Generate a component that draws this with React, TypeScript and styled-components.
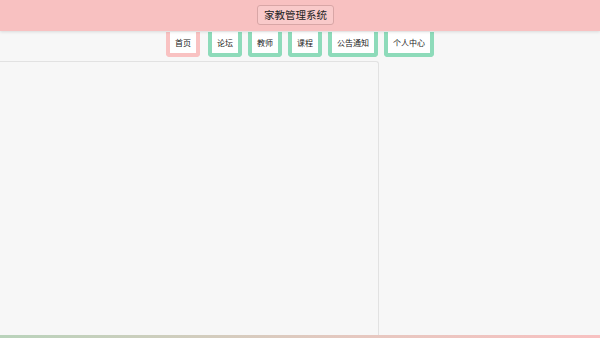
import React from 'react'
import styled, { createGlobalStyle } from 'styled-components'

const navItems = [
    { id: 1, name: '首页', active: true },
    { id: 2, name: '论坛' },
    { id: 3, name: '教师' },
    { id: 4, name: '课程' },
    { id: 5, name: '公告通知' },
    { id: 6, name: '个人中心' },
]

const App = () => {
    return (
        <Page>
            <GlobalStyle />
            <Header>
                <Title>家教管理系统</Title>
            </Header>

            <Nav>
            {
                navItems.map((item) => (
                    <NavButton key={item.id} $active={item.active}>{item.name}</NavButton>
                ))
            }
            </Nav>

            <Content>
                <MainPanel />
                <SidePanel />
            </Content>

            <BottomBar />
        </Page>
    )
}

const GlobalStyle = createGlobalStyle`
    html, body {
        margin: 0;
        padding: 0;
        height: 100%;
    }
    body {
        font-family: "Noto Sans CJK SC", "Noto Sans", sans-serif;
        background: #f7f7f7;
    }
    #root {
        height: 100%;
    }
`

const Page = styled.div`
    height: 100vh;
    display: flex;
    flex-direction: column;
    background: #f7f7f7;
    overflow: hidden;
`

const Header = styled.div`
    height: 31px;
    flex: 0 0 31px;
    background: #f8c1c1;
    display: flex;
    align-items: center;
    justify-content: center;
    box-shadow: 0 1px 3px rgba(0,0,0,0.12);
    position: relative;
    z-index: 1;
`

const Title = styled.div`
    font-size: 10.5px;
    line-height: 18px;
    color: #222;
    padding: 0 6px;
    border: 1px solid #d8a6a6;
    border-radius: 3px;
    background: #f9caca;
    margin: -1px 9px 0 0;
`

const Nav = styled.div`
    height: 30px;
    flex: 0 0 30px;
    display: flex;
    justify-content: center;
    align-items: flex-start;
    gap: 6px;
    padding-top: 1px;
    box-sizing: border-box;
`

const NavButton = styled.div<{ $active?: boolean }>`
    height: 25px;
    box-sizing: border-box;
    padding: 0 5px;
    background: #fff;
    border: 4px solid ${({ $active }) => ($active ? '#f9c2c2' : '#8edbba')};
    border-top: none;
    border-radius: 0 0 4px 4px;
    font-size: 8px;
    line-height: 19px;
    color: #222;
    display: flex;
    align-items: center;
    white-space: nowrap;

    &:first-child {
        margin-right: 2px;
    }
`

const Content = styled.div`
    flex: 1;
    display: flex;
    min-height: 0;
`

const MainPanel = styled.div`
    flex: 0 0 378px;
    border-top: 1px solid #e2e2e2;
    border-right: 1px solid #e2e2e2;
    border-top-right-radius: 3px;
    background: #f7f7f7;
`

const SidePanel = styled.div`
    flex: 1;
    background: #f7f7f7;
`

const BottomBar = styled.div`
    height: 3px;
    flex: 0 0 3px;
    background: linear-gradient(to right, #b9d3bb, #e6c8c0 60%, #f8c1c1);
`

export default App
